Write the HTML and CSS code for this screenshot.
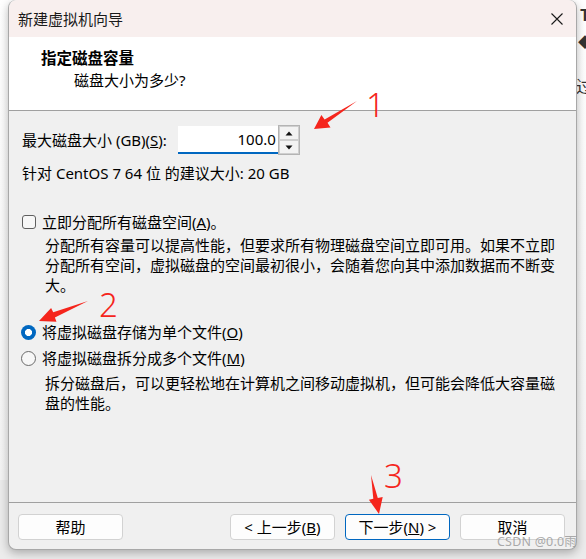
FILE: index.html
```html
<!DOCTYPE html>
<html lang="zh-CN">
<head>
<meta charset="utf-8">
<title>新建虚拟机向导</title>
<link rel="stylesheet" href="styles.css">
</head>
<body>
<div class="backdrop"><span class="bg-t">T</span><span class="bg-d">◆</span><span class="bg-g">过</span></div>
<div class="dialog">
  <div class="titlebar">
    <span class="title">新建虚拟机向导</span>
    <svg class="close" width="12" height="12" viewBox="0 0 12 12"><path d="M0.5 0.5L11.5 11.5M11.5 0.5L0.5 11.5" stroke="#1a1a1a" stroke-width="1.1" fill="none"/></svg>
  </div>
  <div class="header">
    <div class="h-title">指定磁盘容量</div>
    <div class="h-sub">磁盘大小为多少?</div>
  </div>
  <div class="content">
    <div class="size-row">
      <span class="size-label">最大磁盘大小 (GB)(<u>S</u>):</span>
      <div class="spin">
        <div class="spin-input">100.0</div>
        <div class="spin-btns">
          <div class="spin-btn"><svg width="8" height="5" viewBox="0 0 8 5"><path d="M4 0.5L7.5 4.5H0.5Z" fill="#111"/></svg></div>
          <div class="spin-btn"><svg width="8" height="5" viewBox="0 0 8 5"><path d="M0.5 0.5H7.5L4 4.5Z" fill="#111"/></svg></div>
        </div>
      </div>
    </div>
    <div class="rec">针对 CentOS 7 64 位 的建议大小: 20 GB</div>
    <div class="opt check-row"><span class="checkbox"></span><span>立即分配所有磁盘空间(<u>A</u>)。</span></div>
    <p class="desc">分配所有容量可以提高性能，但要求所有物理磁盘空间立即可用。如果不立即分配所有空间，虚拟磁盘的空间最初很小，会随着您向其中添加数据而不断变大。</p>
    <div class="opt radio-row first"><span class="radio on"></span><span>将虚拟磁盘存储为单个文件(<u>O</u>)</span></div>
    <div class="opt radio-row second"><span class="radio"></span><span>将虚拟磁盘拆分成多个文件(<u>M</u>)</span></div>
    <p class="desc desc2">拆分磁盘后，可以更轻松地在计算机之间移动虚拟机，但可能会降低大容量磁盘的性能。</p>
  </div>
  <div class="footer">
    <button class="btn">帮助</button>
    <div class="nav">
      <button class="btn">&lt; 上一步(<u>B</u>)</button>
      <button class="btn default">下一步(<u>N</u>) &gt;</button>
      <button class="btn">取消</button>
    </div>
  </div>
</div>
<svg class="annot" width="586" height="559" viewBox="0 0 586 559">
  <g fill="#f5251c">
    <polygon points="357,101 327.5,122.8 330.5,127.6 314,129 321.4,115.1 324.6,119.4"/>
    <polygon points="88,301 54.9,317.6 56.5,321.8 39,321 51.1,308.1 53.2,312.3"/>
    <polygon points="371,475 373.3,498.8 368.9,499.7 379,514 382.7,496.9 377.8,497.9"/>
    <text class="num" x="366" y="117">1</text>
    <text class="num" x="99" y="317">2</text>
    <text class="num" x="384" y="488">3</text>
  </g>
</svg>
<div class="watermark">CSDN @0.0雨</div>
</body>
</html>
```

FILE: styles.css
```css
html, body {
  margin: 0;
  padding: 0;
}
body {
  position: relative;
  width: 586px;
  height: 559px;
  overflow: hidden;
  background: #ececec;
  font-family: "Noto Sans", "Noto Sans CJK SC", sans-serif;
  font-size: 15px;
  color: #000;
}
.backdrop {
  position: absolute;
  left: 0;
  top: 0;
  width: 586px;
  height: 480px;
  overflow: hidden;
  background: linear-gradient(#ffffff, #f4f4f4);
}
.backdrop span {
  position: absolute;
  color: #333;
  font-family: "Noto Sans CJK SC", sans-serif;
}
.bg-t { left: 580px; top: 2px; font-size: 16px; font-weight: bold; }
.bg-d { left: 578px; top: 31px; font-size: 14px; color: #3a4a5a; }
.bg-g { left: 576px; top: 73px; font-size: 17px; }

.dialog {
  position: relative;
  margin-left: 8px;
  width: 569px;
  height: 550px;
  box-sizing: border-box;
  border: 1px solid #a8a8a8;
  border-top: none;
  border-radius: 8px;
  background: #f0f0f0;
  box-shadow: 0 3px 10px rgba(0, 0, 0, 0.28);
  display: flex;
  flex-direction: column;
  overflow: hidden;
}
.titlebar {
  height: 37px;
  flex: none;
  box-sizing: border-box;
  background: #f8efee;
  display: flex;
  align-items: center;
  justify-content: space-between;
  padding: 0 13px 0 9px;
  border-radius: 8px 8px 0 0;
}
.title {
  font-size: 15px;
  line-height: 20px;
  color: #1a1a1a;
}
.close {
  display: block;
}
.header {
  height: 74px;
  flex: none;
  box-sizing: border-box;
  background: #fff;
  border-bottom: 1px solid #a0a0a0;
  padding: 10px 0 0 32px;
}
.h-title {
  font-weight: bold;
  font-size: 15.5px;
  line-height: 20px;
  font-family: "Noto Sans CJK SC", sans-serif;
}
.h-sub {
  margin-top: 3px;
  margin-left: 33px;
  line-height: 20px;
}
.content {
  flex: 1;
  padding: 15px 0 0 13px;
}
.size-row {
  display: flex;
  align-items: center;
  height: 28px;
}
.size-label {
  line-height: 20px;
  margin-right: 11px;
}
.spin {
  display: flex;
  align-items: stretch;
  height: 28px;
}
.spin-input {
  width: 100px;
  box-sizing: border-box;
  background: #fff;
  border-bottom: 2px solid #0067c0;
  text-align: right;
  padding-right: 2px;
  line-height: 27px;
  height: 28px;
}
.spin-btns {
  width: 22px;
  box-sizing: border-box;
  border: 1px solid #b4b4b4;
  display: flex;
  flex-direction: column;
  background: #f0f0f0;
  margin-top: -1px;
  height: 30px;
}
.spin-btn {
  flex: 1;
  display: flex;
  align-items: center;
  justify-content: center;
  border: 1px solid #cfcfcf;
  background: #f3f3f3;
}
.spin-btn svg { display: block; }
.rec {
  margin-top: 9px;
  line-height: 20px;
}
.opt {
  display: flex;
  align-items: center;
  line-height: 20px;
  height: 20px;
}
.check-row {
  margin-top: 29px;
}
.checkbox {
  width: 14px;
  height: 14px;
  box-sizing: border-box;
  border: 1px solid #5f5f5f;
  border-radius: 3px;
  background: #f7f7f7;
  margin-right: 6px;
}
.desc {
  margin: 3px 0 0 23px;
  width: 516px;
  line-height: 20px;
}
.radio-row.first {
  margin-top: 27px;
}
.radio-row.second {
  margin-top: 6px;
}
.desc2 {
  margin-top: 5px;
}
.radio {
  width: 15px;
  height: 15px;
  box-sizing: border-box;
  border-radius: 50%;
  border: 1px solid #6a6a6a;
  background: #f7f7f7;
  margin-left: -1px;
  margin-right: 6px;
}
.radio.on {
  border: none;
  background: radial-gradient(circle, #ffffff 0 3.3px, #0067c0 3.8px);
}
.footer {
  height: 47px;
  flex: none;
  box-sizing: border-box;
  border-top: 1px solid #a0a0a0;
  display: flex;
  align-items: flex-start;
  justify-content: space-between;
  padding: 11px 11px 0 9px;
}
.nav {
  display: flex;
  gap: 10px;
}
.btn {
  width: 105px;
  height: 26px;
  box-sizing: border-box;
  background: #fdfdfd;
  border: 1px solid #d2d2d2;
  border-radius: 4px;
  font-family: "Noto Sans", "Noto Sans CJK SC", sans-serif;
  font-size: 15px;
  line-height: 22px;
  color: #000;
  padding: 0;
}
.btn.default {
  border-color: #0067c0;
}
.annot {
  position: absolute;
  left: 0;
  top: 0;
  pointer-events: none;
}
.num {
  font-family: "Noto Sans", sans-serif;
  font-weight: 300;
  font-size: 33px;
}
.watermark {
  position: absolute;
  left: 497px;
  top: 534px;
  font-family: "Noto Sans", "Noto Sans CJK SC", sans-serif;
  font-size: 12.5px;
  line-height: 16px;
  color: rgba(150, 150, 150, 0.8);
  letter-spacing: 0.2px;
}
```
